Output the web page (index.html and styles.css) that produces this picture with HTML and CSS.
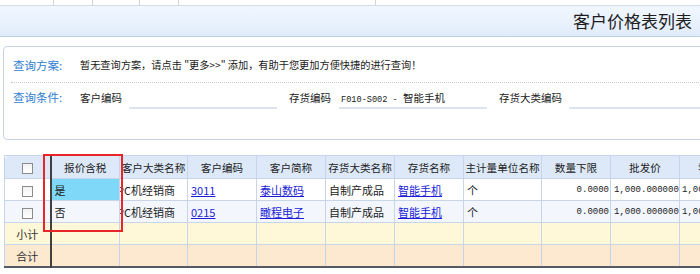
FILE: index.html
```html
<!DOCTYPE html>
<html lang="zh-CN">
<head>
<meta charset="utf-8">
<title>客户价格表列表</title>
<link rel="stylesheet" href="styles.css">
</head>
<body>
<div class="tabstrip">
  <span class="tab t1"></span><span class="tab t2"></span><span class="tab t3"></span><span class="tab t4"></span><span class="tab t5"></span><span class="tab t6"></span>
</div>
<div class="titlebar"><h1 class="title">客户价格表列表</h1></div>

<div class="query">
  <div class="qrow qrow-top">
    <span class="qlabel">查询方案:</span>
    <span class="qtext">暂无查询方案，请点击 "更多&gt;&gt;" 添加，有助于您更加方便快捷的进行查询！</span>
  </div>
  <div class="qrow">
    <span class="qlabel">查询条件:</span>
    <span class="field-label fl1">客户编码</span>
    <span class="field f1"></span>
    <span class="field-label fl2">存货编码</span>
    <span class="field f2"><span class="mono">F010-S002 - </span>智能手机</span>
    <span class="field-label fl3">存货大类编码</span>
    <span class="field f3"></span>
  </div>
</div>

<div class="grid-wrap">
  <table class="grid">
    <colgroup>
      <col class="c-chk"><col class="c-tax"><col class="c-w68"><col class="c-w69"><col class="c-w69"><col class="c-w69"><col class="c-w69"><col class="c-w78"><col class="c-w69"><col class="c-w69"><col class="c-w69">
    </colgroup>
    <thead>
      <tr>
        <th class="chk-cell"><span class="chk"></span></th>
        <th class="frozen">报价含税</th>
        <th>客户大类名称</th>
        <th>客户编码</th>
        <th>客户简称</th>
        <th>存货大类名称</th>
        <th>存货名称</th>
        <th>主计量单位名称</th>
        <th>数量下限</th>
        <th>批发价</th>
        <th>零售价</th>
      </tr>
    </thead>
    <tbody>
      <tr class="row-a">
        <td class="chk-cell"><span class="chk"></span></td>
        <td class="frozen sel">是</td>
        <td class="clip">PC机经销商</td>
        <td><a href="#">3011</a></td>
        <td><a href="#">泰山数码</a></td>
        <td>自制产成品</td>
        <td><a href="#">智能手机</a></td>
        <td>个</td>
        <td class="num">0.0000</td>
        <td class="num">1,000.000000</td>
        <td class="num left">1,000.000000</td>
      </tr>
      <tr class="row-b">
        <td class="chk-cell"><span class="chk"></span></td>
        <td class="frozen">否</td>
        <td class="clip">PC机经销商</td>
        <td><a href="#">0215</a></td>
        <td><a href="#">瞰程电子</a></td>
        <td>自制产成品</td>
        <td><a href="#">智能手机</a></td>
        <td>个</td>
        <td class="num">0.0000</td>
        <td class="num">1,000.000000</td>
        <td class="num left">1,000.000000</td>
      </tr>
      <tr class="row-sub">
        <td class="sum-label">小计</td>
        <td class="frozen"></td><td></td><td></td><td></td><td></td><td></td><td></td><td></td><td></td><td></td>
      </tr>
      <tr class="row-total">
        <td class="sum-label">合计</td>
        <td class="frozen"></td><td></td><td></td><td></td><td></td><td></td><td></td><td></td><td></td><td></td>
      </tr>
    </tbody>
  </table>
  <div class="mark"></div>
</div>
</body>
</html>
```

FILE: styles.css
```css
html, body {
  margin: 0;
  padding: 0;
  background: #ffffff;
  overflow: hidden;
}
body {
  width: 700px;
  height: 274px;
  font-family: "Noto Sans CJK SC", "DejaVu Sans", sans-serif;
  font-size: 11px;
  color: #1a1a1a;
}

/* top tab strip remnants */
.tabstrip {
  display: flex;
  height: 5px;
}
.tab {
  height: 5px;
  border-right: 1px solid #d4d4d4;
}
.t1 { width: 53px; }
.t2 { width: 38px; }
.t3 { width: 46px; }
.t4 { width: 38px; }
.t5 { width: 196px; }
.t6 { width: 0; border-right: none; }

/* title bar */
.titlebar {
  height: 30px;
  border-top: 1px solid #cfdcec;
  border-bottom: 1px solid #bccfe7;
  background: linear-gradient(#f1f7ff, #e1ecfa);
  display: flex;
  align-items: center;
  justify-content: flex-end;
  padding-right: 8px;
}
.title {
  margin: 0;
  font-size: 17px;
  font-weight: normal;
  color: #1e1e1e;
  line-height: 20px;
}

/* query panel */
.query {
  margin: 9px -10px 0 3px;
  height: 92px;
  border: 1px solid #c3d2e6;
  border-radius: 4px;
  padding-left: 7px;
}
.qrow {
  display: flex;
  align-items: center;
  height: 28px;
}
.qrow-top {
  height: 35px;
  border-bottom: 1px dotted #c9c9c9;
}
.qlabel {
  width: 67px;
  padding-left: 2px;
  color: #2f7ed3;
  font-size: 11.5px;
  flex: none;
}
.qtext {
  font-size: 10.2px;
  white-space: nowrap;
  color: #1a1a1a;
}
.field-label {
  flex: none;
  font-size: 10.5px;
  color: #222;
}
.fl1 { width: 49px; }
.fl2 { width: 50px; }
.fl3 { width: 70px; }
.field {
  flex: none;
  height: 18px;
  line-height: 18px;
  border-bottom: 2px solid #dde2ec;
  margin-top: 4px;
  font-size: 10.5px;
  white-space: nowrap;
  padding-left: 2px;
}
.f1 { width: 146px; margin-right: 12px; }
.f2 { width: 146px; margin-right: 12px; }
.f3 { width: 148px; }
.mono {
  font-family: "Liberation Mono", monospace;
  font-size: 8.6px;
  white-space: pre;
}

/* grid */
.grid-wrap {
  position: relative;
  margin: 15px 0 0 4px;
}
.grid {
  border-collapse: collapse;
  table-layout: fixed;
  width: 744px;
  border-bottom: 2px solid #555b66;
}
.c-chk { width: 46px; }
.c-tax { width: 69px; }
.c-w68 { width: 68px; }
.c-w69 { width: 69px; }
.c-w78 { width: 78px; }

.grid th, .grid td {
  border: 1px solid #c7d5e8;
  height: 21px;
  padding: 0 3px;
  white-space: nowrap;
  overflow: hidden;
  font-size: 11px;
  text-align: left;
}
.grid th {
  background: #dde9f8;
  font-weight: normal;
  text-align: center;
  height: 22px;
  padding: 0;
  font-size: 10.6px;
  color: #222;
  text-overflow: clip;
}
.grid thead tr th:first-child {
  border-top-left-radius: 4px;
}
.grid .frozen {
  border-left: 2px solid #404040;
}
.grid td.clip {
  padding-left: 0;
  text-indent: -3px;
}
.row-a td { background: #ffffff; }
.row-b td { background: #f3f7fd; }
.row-a td.sel { background: #80d8f8; }
.row-sub td { background: #fff8d8; }
.row-total td { background: #fde9d0; }
.grid td.chk-cell, .grid th.chk-cell {
  text-align: center;
}
.grid td.sum-label {
  text-align: center;
  color: #333;
}
.chk {
  display: inline-block;
  width: 9px;
  height: 9px;
  border: 1px solid #8c8c8c;
  background: linear-gradient(#f2f2f2, #ffffff);
  vertical-align: middle;
}
.grid a {
  color: #1c1cd8;
  text-decoration: underline;
}
.grid td.num {
  text-align: right;
  font-family: "Liberation Mono", monospace;
  font-size: 9px;
  padding-right: 1px;
}
.grid td.num.left {
  text-align: left;
  padding-left: 2px;
}

/* red annotation rectangle */
.mark {
  position: absolute;
  left: 39px;
  top: -1px;
  width: 76px;
  height: 74px;
  border: 2px solid #e8262a;
}
```
